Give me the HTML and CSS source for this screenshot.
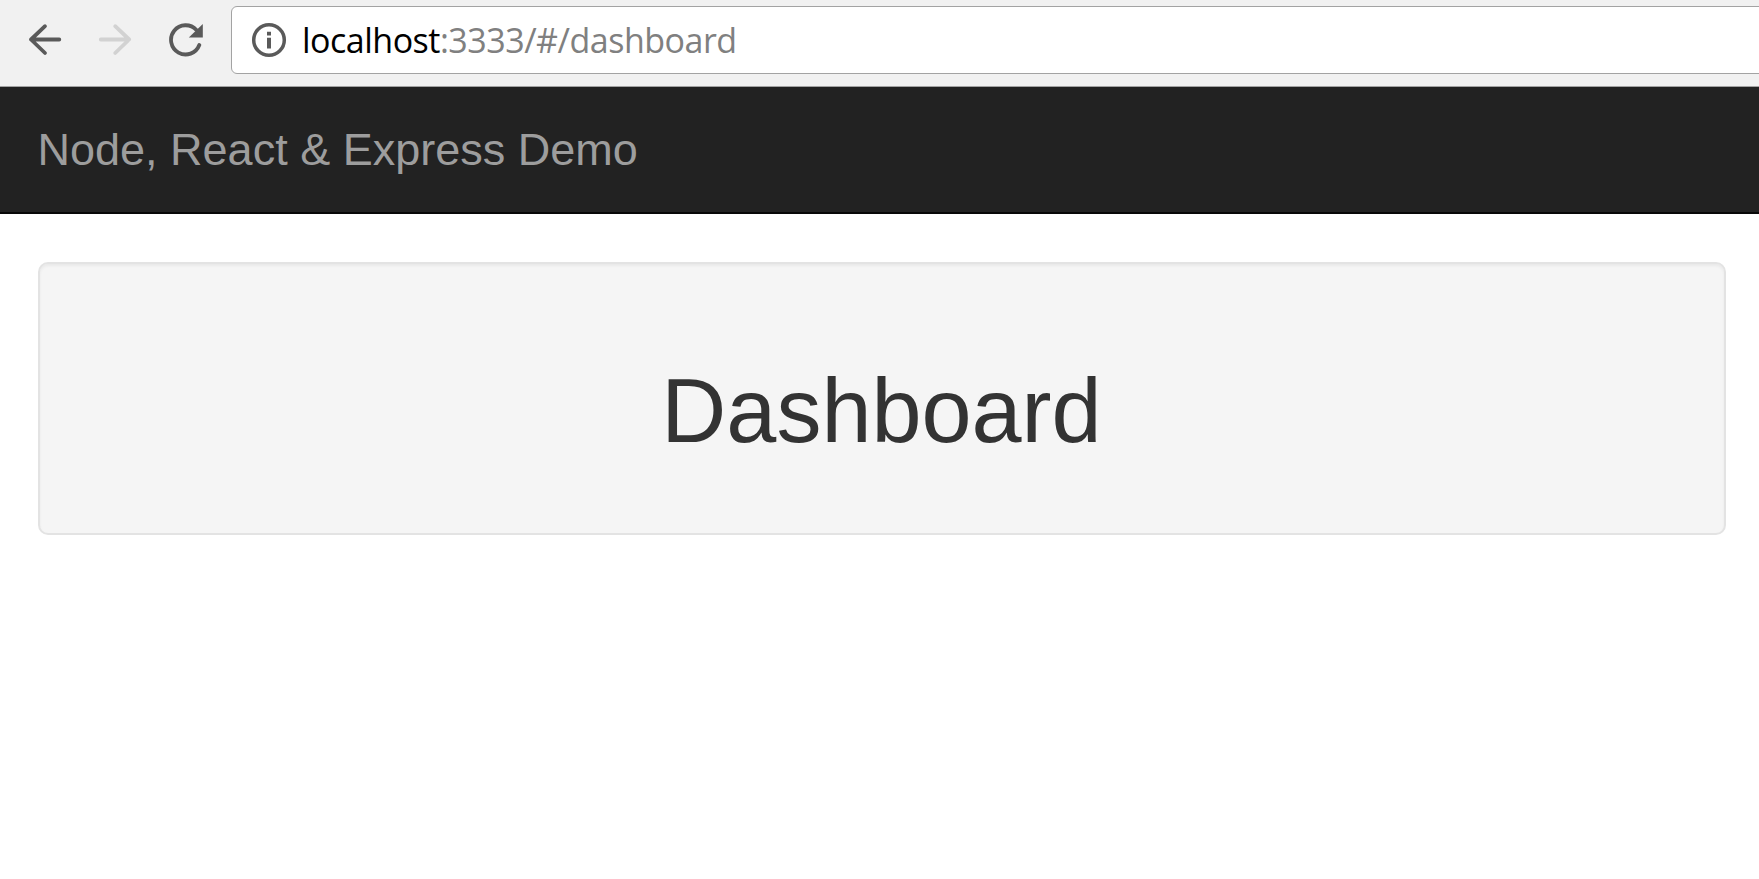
FILE: index.html
```html
<!DOCTYPE html>
<html lang="en">
<head>
<meta charset="utf-8">
<title>Dashboard</title>
<link rel="stylesheet" href="styles.css">
</head>
<body>
<header class="toolbar">
  <svg class="icon back" viewBox="0 0 36 36"><path d="M18 5.2 4 18.5 18 32M4 18.5H32.3"/></svg>
  <svg class="icon forward" viewBox="0 0 36 36"><path d="M17.2 5.2 31.2 18.5 17.2 32M31 18.5H2.8"/></svg>
  <svg class="icon reload" viewBox="0 0 36 36"><path d="M31.3 23A14.6 14.6 0 1 1 28.4 8"/><path class="head" d="M34.8 2v13.5H20.8Z"/></svg>
  <div class="address">
    <svg class="info" viewBox="0 0 36 36"><circle cx="18" cy="18" r="15.3"/><path d="M16 9.7h4v3.8h-4zM16 15.7h4v10.8h-4z"/></svg>
    <div class="url"><span class="host">localhost</span><span class="path">:3333/#/dashboard</span></div>
  </div>
</header>
<nav class="navbar"><span class="brand">Node, React &amp; Express Demo</span></nav>
<main class="content">
  <section class="well"><h1 class="title">Dashboard</h1></section>
</main>
</body>
</html>
```
FILE: styles.css
```css
* { box-sizing: border-box; }
body { margin: 0; height: 879px; overflow: hidden; background: #fff; font-family: "Liberation Sans", Arial, sans-serif; }
.toolbar { display: flex; height: 87px; padding: 6px 0 13px 27px; background: #f1f1f1; border-bottom: 1px solid #a3a3a3; overflow: hidden; }
.icon { flex: none; width: 36px; height: 36px; margin-top: 15px; fill: none; stroke: #5a5a5a; stroke-width: 3.8; stroke-linecap: round; stroke-linejoin: round; }
.forward { margin-left: 35px; stroke: #d2d2d2; }
.reload { margin-left: 34px; margin-top: 16px; }
.head { fill: #5a5a5a; stroke: none; }
.address { display: flex; flex: 1; height: 68px; margin-left: 27px; margin-right: -10px; padding-left: 19px; background: #fff; border: 1px solid #a3a3a3; border-radius: 6px; }
.info { flex: none; width: 36px; height: 36px; margin-top: 15px; fill: #5a5a5a; }
.info circle { fill: none; stroke: #5a5a5a; stroke-width: 3.5; }
.url { margin-left: 15px; font: 34px/66px "Open Sans", sans-serif; letter-spacing: -.5px; white-space: nowrap; }
.host { color: #000; }
.path { color: #808080; }
.navbar { height: 127px; padding-left: 37.5px; background: #222; border-bottom: 2px solid #080808; }
.brand { color: #9d9d9d; font-size: 45px; line-height: 125px; }
.content { padding: 48px 33px 0 38px; }
.well { height: 273px; padding-top: 98px; background: #f5f5f5; border: 2px solid #e3e3e3; border-radius: 10px; box-shadow: inset 0 2px 3px rgba(0,0,0,.05); }
.title { margin: 0 1px 0 0; color: #333; font-size: 90px; font-weight: 400; line-height: 99px; text-align: center; }
```
